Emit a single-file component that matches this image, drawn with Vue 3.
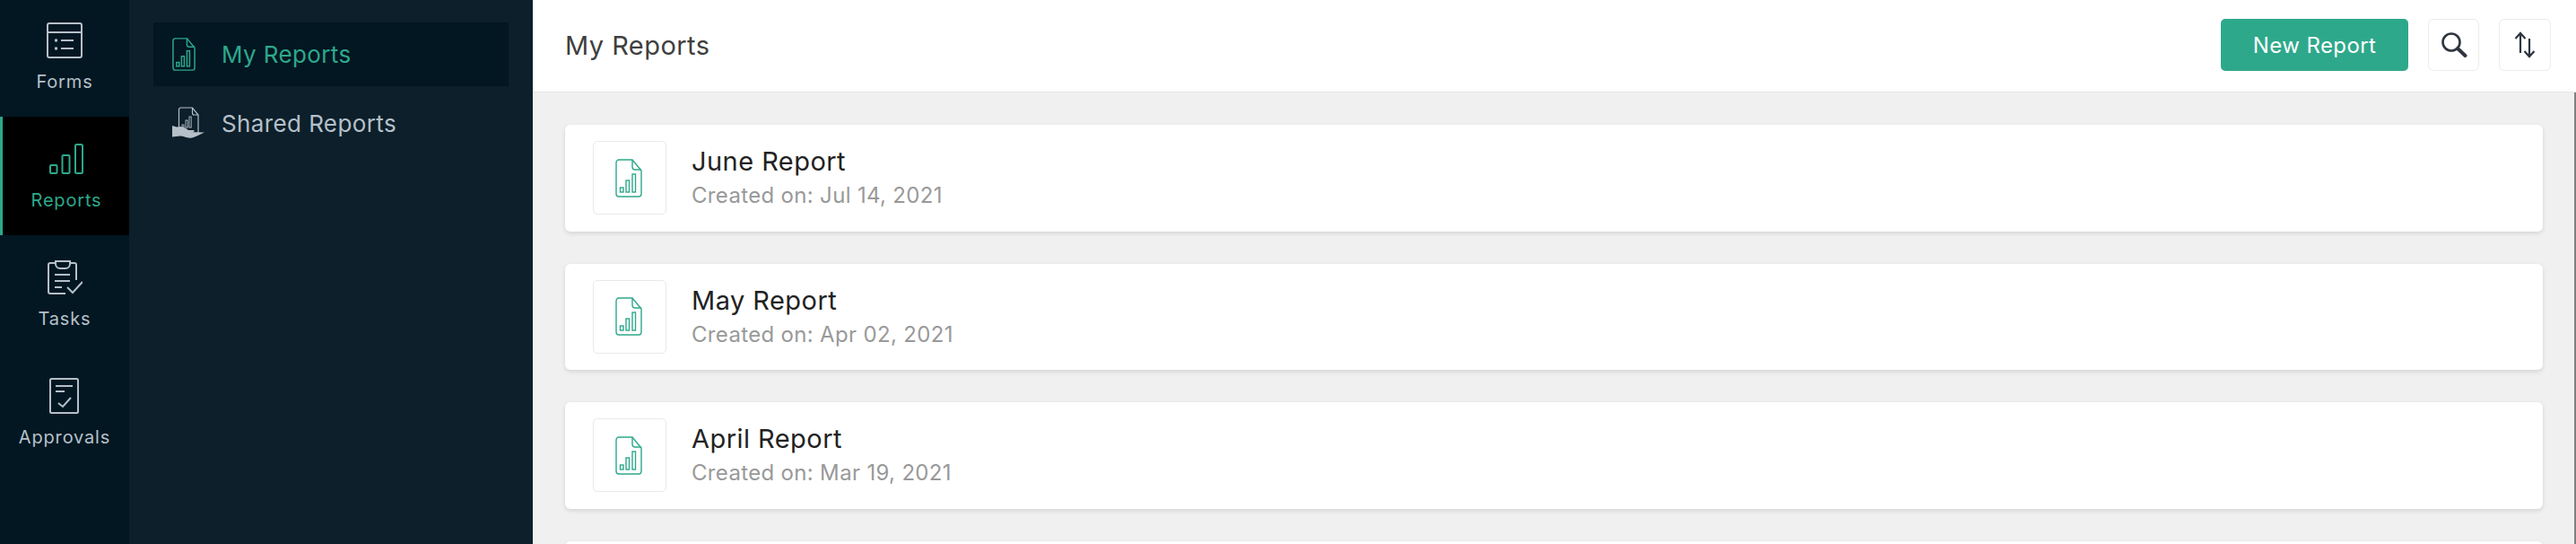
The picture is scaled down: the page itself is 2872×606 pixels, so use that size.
<script setup>
const reports = [
  { id: 1, name: 'June Report', created: 'Jul 14, 2021' },
  { id: 2, name: 'May Report', created: 'Apr 02, 2021' },
  { id: 3, name: 'April Report', created: 'Mar 19, 2021' },
];
</script>

<template>
  <div class="app">
    <!-- Main rail -->
    <nav class="rail">
      <a class="rail-item">
        <svg class="rail-icon" width="40" height="40" viewBox="0 0 40 40" fill="none" stroke="currentColor" stroke-width="2">
          <rect x="1" y="1" width="38" height="38" rx="2" />
          <path d="M1 11h38" />
          <path d="M9 20h3M9 29h3" stroke-width="3" />
          <path d="M16 20h14M16 29h14" />
        </svg>
        <span>Forms</span>
      </a>
      <a class="rail-item active">
        <svg class="rail-icon" width="40" height="40" viewBox="0 0 40 40" fill="none" stroke="currentColor" stroke-width="2">
          <rect x="2" y="27" width="7.500" height="9" rx="1" />
          <rect x="15.500" y="16" width="8" height="20" rx="1" />
          <rect x="30" y="4" width="8" height="32" rx="1.500" />
        </svg>
        <span>Reports</span>
      </a>
      <a class="rail-item">
        <svg class="rail-icon" width="40" height="40" viewBox="0 0 40 40" fill="none" stroke="currentColor" stroke-width="2">
          <path d="M10 4H4a2 2 0 0 0-2 2v30a2 2 0 0 0 2 2h17" />
          <path d="M26 4h5a2 2 0 0 1 2 2v17" />
          <path d="M10 2h16v3a5 5 0 0 1-5 5h-6a5 5 0 0 1-5-5z" />
          <path d="M9 17h17M9 24h17M9 31h8" />
          <path d="M23 31l6 6L40 25" />
        </svg>
        <span>Tasks</span>
      </a>
      <a class="rail-item">
        <svg class="rail-icon" width="40" height="40" viewBox="0 0 40 40" fill="none" stroke="currentColor" stroke-width="2">
          <rect x="4" y="1" width="31" height="38" rx="1.500" />
          <path d="M10 9h19M10 15h10" />
          <path d="M13 28l5 4 9-10" />
        </svg>
        <span>Approvals</span>
      </a>
    </nav>

    <!-- Secondary menu -->
    <aside class="submenu">
      <a class="sub-item active">
        <span class="sub-icon">
          <svg width="26" height="37" viewBox="0 0 30 43" fill="none" stroke="currentColor" stroke-width="1.700">
            <path d="M4 1h15l10 12v26a3 3 0 0 1-3 3H4a3 3 0 0 1-3-3V4a3 3 0 0 1 3-3z" />
            <path d="M19 1v8a3 3 0 0 0 3 3h7" />
            <rect x="5.500" y="32" width="3.500" height="5" />
            <rect x="12" y="24" width="3.500" height="13" />
            <rect x="19" y="17" width="3.500" height="20" />
          </svg>
        </span>
        <span>My Reports</span>
      </a>
      <a class="sub-item">
        <span class="sub-icon">
          <svg width="36" height="38" viewBox="0 0 36 38" fill="none" stroke="currentColor" stroke-width="1.200">
            <path d="M7.500 22V3a2 2 0 0 1 2-2h13l6.500 8v21" />
            <path d="M22.500 1v6a2 2 0 0 0 2 2H29" />
            <rect x="11" y="20" width="2" height="3" stroke-width="0.900" />
            <rect x="15" y="15" width="2.200" height="8" stroke-width="0.900" />
            <rect x="19" y="11" width="2.200" height="12" stroke-width="0.900" />
            <path d="M0 21l5 1.500c4-1.500 9 0 13 3.500h6c1 0 1 2-1 2h-5l18 .5c-5 2-10 5-14 6-6 1-9-2-13-2l-9 1z" fill="currentColor" stroke="none" />
          </svg>
        </span>
        <span>Shared Reports</span>
      </a>
    </aside>

    <main class="main">
      <header class="topbar">
        <h1>My Reports</h1>
        <div class="actions">
          <button class="btn-primary">New Report</button>
          <button class="btn-icon search">
            <svg width="30" height="30" viewBox="0 0 30 30" fill="none" stroke="#2f3640" stroke-width="2.600">
              <circle cx="12" cy="12" r="9.500" />
              <path d="M19 19l8.500 8" stroke-width="4" stroke-linecap="round" />
            </svg>
          </button>
          <button class="btn-icon sort">
            <svg width="24" height="30" viewBox="0 0 24 30" fill="none" stroke="#2f3640" stroke-width="2.200">
              <path d="M7 2v22M1.500 8L7 2l5.500 6" />
              <path d="M17 8v20M11.500 22l5.500 6 5.500-6" />
            </svg>
          </button>
        </div>
      </header>

      <section class="list">
        <div v-for="report in reports" :key="report.id" class="card">
          <div class="thumb">
            <svg width="30" height="43" viewBox="0 0 30 43" fill="none" stroke="#2ea88b" stroke-width="1.400">
              <path d="M4 1h15l10 12v26a3 3 0 0 1-3 3H4a3 3 0 0 1-3-3V4a3 3 0 0 1 3-3z" />
              <path d="M19 1v8a3 3 0 0 0 3 3h7" />
              <rect x="5.500" y="32" width="3.500" height="5" />
              <rect x="12" y="24" width="3.500" height="13" />
              <rect x="19" y="17" width="3.500" height="20" />
            </svg>
          </div>
          <div class="card-text">
            <div class="card-title">{{ report.name }}</div>
            <div class="card-sub">Created on: {{ report.created }}</div>
          </div>
        </div>
        <div class="card"></div>
      </section>
    </main>
  </div>
</template>

<style>
html,
body {
  margin: 0;
  overflow: hidden;
}
</style>

<style scoped>
.app {
  display: flex;
  height: 100vh;
  overflow: hidden;
  font-family: Inter, 'Noto Sans', sans-serif;
}

.rail {
  flex: 0 0 144px;
  background: #021722;
}

.rail-item {
  display: flex;
  flex-direction: column;
  align-items: center;
  box-sizing: border-box;
  height: 132px;
  padding-top: 27px;
  color: #b5c0c9;
  font-size: 20px;
  letter-spacing: 0.83px;
  line-height: 24px;
}

.rail-item:first-child {
  height: 130px;
  padding-top: 25px;
}

.rail-item span {
  margin-top: 14px;
}

.rail-item.active {
  background: #000;
  border-left: 3px solid #2ea88b;
  color: #2ea88b;
  padding-left: 1px;
}

.submenu {
  flex: 0 0 450px;
  box-sizing: border-box;
  background: #0c1f2a;
  padding: 25px 27px 0;
}

.sub-item {
  display: flex;
  align-items: center;
  height: 71px;
  margin-bottom: 6px;
  color: #b5c0c9;
  font-size: 26px;
  letter-spacing: 0.39px;
}

.sub-item.active {
  background: #021722;
  color: #2ea88b;
}

.sub-icon {
  display: flex;
  justify-content: flex-start;
  width: 76px;
  padding-left: 21px;
  box-sizing: border-box;
}

.main {
  flex: 1;
  min-width: 0;
  background: #f0f0f0;
  display: flex;
  flex-direction: column;
}

.topbar {
  display: flex;
  align-items: center;
  justify-content: space-between;
  box-sizing: border-box;
  height: 103px;
  padding: 0 28px 2px 36px;
  background: #fff;
  border-bottom: 1px solid #e6e6e6;
}

.topbar h1 {
  margin: 0;
  font-size: 29px;
  font-weight: 400;
  letter-spacing: 0.45px;
  color: #3f3f3f;
}

.actions {
  display: flex;
  align-items: center;
  gap: 22px;
}

.btn-primary {
  width: 209px;
  height: 58px;
  border: 0;
  border-radius: 5px;
  background: #2ea88b;
  color: #fff;
  font-family: inherit;
  font-size: 24px;
  letter-spacing: 0.4px;
}

.btn-icon {
  display: flex;
  align-items: center;
  justify-content: center;
  height: 58px;
  padding: 0;
  border: 1px solid #ececec;
  border-radius: 6px;
  background: #fff;
}

.search {
  width: 57px;
}

.sort {
  width: 58px;
}

.list {
  flex: 1;
  padding: 36px 35px 0 36px;
  border-right: 2px solid #808080;
  overflow: hidden;
}

.card {
  display: flex;
  align-items: center;
  box-sizing: border-box;
  height: 118.500px;
  margin-bottom: 36px;
  padding-left: 31px;
  background: #fff;
  border-radius: 6px;
  box-shadow: 0 2px 5px rgba(0, 0, 0, 0.12);
}

.thumb {
  display: flex;
  align-items: center;
  justify-content: center;
  box-sizing: border-box;
  width: 82px;
  height: 82px;
  padding-right: 2px;
  border: 1px solid #e9e9e9;
  border-radius: 5px;
}

.card-text {
  margin-left: 28px;
}

.card-title {
  font-size: 29px;
  line-height: 36px;
  letter-spacing: 0.45px;
  color: #222;
}

.card-sub {
  margin-top: 4px;
  font-size: 24px;
  line-height: 32px;
  letter-spacing: 0.33px;
  color: #999;
}
</style>
